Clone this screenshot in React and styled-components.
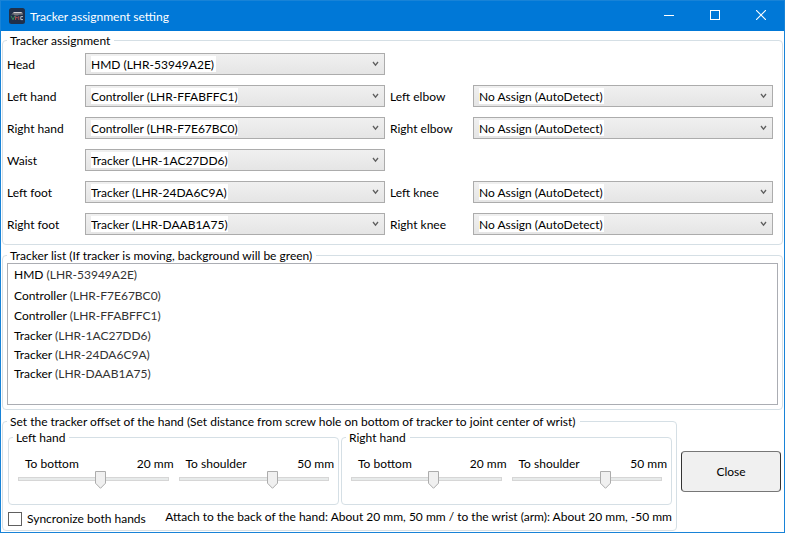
import React, { useState } from "react";
import styled, { createGlobalStyle } from "styled-components";

const GlobalStyle = createGlobalStyle`
  * { box-sizing: border-box; }
  body {
    margin: 0;
    background: #fff;
    color: #000;
    font-family: Lato, "Open Sans", sans-serif;
    font-size: 12px;
    line-height: 15px;
  }
  button, input, select { font: inherit; color: inherit; }
`;

const svgUrl = (svg) => `url("data:image/svg+xml,${encodeURIComponent(svg)}")`;

const chevron = svgUrl(
  `<svg xmlns="http://www.w3.org/2000/svg" width="7" height="6"><path d="M1 1L3.5 4.2L6 1" fill="none" stroke="#606060" stroke-width="1.3"/></svg>`
);
const thumb = svgUrl(
  `<svg xmlns="http://www.w3.org/2000/svg" width="11" height="18"><path d="M.5 .5H10.5V12.2L5.5 17.3L.5 12.2Z" fill="#f0f0f0" stroke="#acacac"/></svg>`
);

const Window = styled.div`
  border: 1px solid #1883d7;
  min-height: 100vh;
`;

const TitleBar = styled.header`
  display: flex;
  align-items: center;
  height: 30px;
  padding-left: 8px;
  background: #0078d7;
  color: #fff;
`;

const Title = styled.h1`
  flex: 1;
  margin: 0 0 0 5px;
  font-size: 12px;
  font-weight: 400;
`;

const CaptionButton = styled.button`
  display: grid;
  place-items: center;
  width: 46px;
  height: 30px;
  padding: 0 0 2px;
  border: 0;
  background: transparent;
`;

const Content = styled.main`
  padding: 2px 1px 1px;
`;

const Group = styled.fieldset`
  min-width: 0;
  margin: 0;
  padding: ${(p) => p.$pad || "0 4px"};
  border: 1px solid #d5dfe5;
  border-radius: 4px;
`;

const Legend = styled.legend`
  padding: 0 4px 0 3px;
  white-space: nowrap;
`;

const AssignGrid = styled.div`
  display: grid;
  grid-template-columns: 78px minmax(0, 1fr) 88px minmax(0, 1fr);
  row-gap: 10px;
  padding-right: 5px;
`;

const FieldLabel = styled.label`
  grid-column: ${(p) => (p.$second ? 3 : 1)};
  align-self: center;
  padding-left: ${(p) => (p.$second ? "5px" : "0")};
`;

const Select = styled.select`
  appearance: none;
  width: 100%;
  height: 22px;
  padding: 0 20px 0 5px;
  border: 1px solid #acacac;
  border-radius: 0;
  background:
    ${chevron} right 5px top 7px no-repeat,
    linear-gradient(#fff, #fff) 5px 2px / ${(p) => p.$mark}px 16px no-repeat,
    linear-gradient(#f0f0f0, #e5e5e5);
`;

const DeviceList = styled.ul`
  height: 142px;
  margin: 0;
  padding: 0 6px;
  border: 1px solid #abadb3;
  list-style: none;
  overflow: auto;
`;

const Device = styled.li`
  line-height: ${(p) => p.$height}px;
`;

const Serial = styled.span`
  color: #333;
`;

const Stack = styled.div`
  display: flex;
  flex-direction: column;
  gap: 3px;
`;

const BottomRow = styled.div`
  display: flex;
  gap: 4px;
  align-items: center;
  padding: 1px 2px 0 0;
`;

const OffsetGroup = styled(Group)`
  flex: 1;
`;

const Hands = styled.div`
  display: grid;
  grid-template-columns: 1fr 1fr;
  gap: 2px;
  padding: 1px 0 0 1px;
`;

const Sliders = styled.div`
  display: grid;
  grid-template-columns: 1fr 1fr;
`;

const SliderHead = styled.div`
  display: flex;
  justify-content: space-between;
  padding-left: 12px;
  white-space: nowrap;
`;

const Range = styled.input`
  appearance: none;
  display: block;
  width: calc(100% - 10px);
  height: 16px;
  margin: 0 5px;
  background: transparent;
  &::-webkit-slider-runnable-track {
    height: 4px;
    border: 1px solid #d6d6d6;
    background: #e7eaea;
  }
  &::-webkit-slider-thumb {
    appearance: none;
    width: 11px;
    height: 18px;
    margin-top: -7px;
    background: ${thumb} no-repeat;
  }
`;

const Footer = styled.div`
  display: flex;
  align-items: center;
  justify-content: space-between;
  height: 25px;
  padding-left: 1px;
  white-space: nowrap;
`;

const CheckLabel = styled.label`
  display: flex;
  align-items: center;
  gap: 5px;
  padding-top: 2px;
`;

const Check = styled.input`
  appearance: none;
  width: 14px;
  height: 14px;
  margin: 0;
  border: 1px solid #606060;
  background: #fff;
  &:checked { box-shadow: inset 0 0 0 2px #fff; background: #212121; }
`;

const Hint = styled.span`
  padding-bottom: 2px;
`;

const CloseButton = styled.button`
  width: 100px;
  height: 41px;
  margin-bottom: 2px;
  padding: 0;
  border: 1px solid #333;
  border-top-color: #777;
  border-bottom-color: #777;
  border-radius: 4px;
  background: #f0f0f0;
`;

function AppIcon() {
  return (
    <svg width="16" height="16" viewBox="0 0 16 16" aria-hidden="true">
      <rect width="16" height="16" rx="2.5" fill="#20304a" />
      <path d="M2.2 6.4L5 4H12.8L13.8 5V6.8H10L9 7.6H6L4.6 6.6Z" fill="#77777d" />
      <path d="M4.6 4.5H12.6" stroke="#d0d0d4" strokeWidth="1" />
      <path d="M2 7.8L4 11.8L5.8 7.8" fill="none" stroke="#3a8a58" strokeWidth="1" />
      <path d="M6.6 12V8.4L8.2 10.2L9.8 8.4V12" fill="none" stroke="#a8504e" strokeWidth="1" />
      <path d="M14 8.6H11.8V11.6H14" fill="none" stroke="#b9c2cc" strokeWidth="1" />
    </svg>
  );
}

const AUTO = "No Assign (AutoDetect)";
const fields = [
  { label: "Head", value: "HMD (LHR-53949A2E)", mark: 125 },
  { label: "Left hand", value: "Controller (LHR-FFABFFC1)", mark: 147 },
  { label: "Left elbow", value: AUTO, mark: 125, second: true },
  { label: "Right hand", value: "Controller (LHR-F7E67BC0)", mark: 147 },
  { label: "Right elbow", value: AUTO, mark: 125, second: true },
  { label: "Waist", value: "Tracker (LHR-1AC27DD6)", mark: 137 },
  { label: "Left foot", value: "Tracker (LHR-24DA6C9A)", mark: 137 },
  { label: "Left knee", value: AUTO, mark: 125, second: true },
  { label: "Right foot", value: "Tracker (LHR-DAAB1A75)", mark: 137 },
  { label: "Right knee", value: AUTO, mark: 125, second: true },
];

const devices = [
  { kind: "HMD", serial: "LHR-53949A2E", height: 22 },
  { kind: "Controller", serial: "LHR-F7E67BC0", height: 20 },
  { kind: "Controller", serial: "LHR-FFABFFC1", height: 20 },
  { kind: "Tracker", serial: "LHR-1AC27DD6", height: 19 },
  { kind: "Tracker", serial: "LHR-24DA6C9A", height: 19 },
  { kind: "Tracker", serial: "LHR-DAAB1A75", height: 19 },
];

const options = [AUTO, ...devices.map((d) => `${d.kind} (${d.serial})`)];

function Field({ label, value, mark, second }) {
  const id = label.toLowerCase().replace(" ", "-");
  return (
    <>
      <FieldLabel htmlFor={id} $second={second}>{label}</FieldLabel>
      <Select id={id} defaultValue={value} $mark={mark}>
        {options.map((o) => <option key={o}>{o}</option>)}
      </Select>
    </>
  );
}

function OffsetSlider({ id, label, initial }) {
  const [value, setValue] = useState(initial);
  return (
    <div>
      <SliderHead>
        <label htmlFor={id}>{label}</label>
        <output htmlFor={id}>{value} mm</output>
      </SliderHead>
      <Range id={id} type="range" min="-180" max="180" value={value}
        onChange={(e) => setValue(Number(e.target.value))} />
    </div>
  );
}

function Hand({ name, id }) {
  return (
    <Group $pad="11px 4px 17px">
      <Legend>{name}</Legend>
      <Sliders>
        <OffsetSlider id={`${id}-bottom`} label="To bottom" initial={20} />
        <OffsetSlider id={`${id}-shoulder`} label="To shoulder" initial={50} />
      </Sliders>
    </Group>
  );
}

export default function App() {
  return (
    <Window>
      <GlobalStyle />
      <TitleBar>
        <AppIcon />
        <Title>Tracker assignment setting</Title>
        <CaptionButton aria-label="Minimize">
          <svg width="10" height="10"><path d="M0 5.5H10" stroke="#fff" /></svg>
        </CaptionButton>
        <CaptionButton aria-label="Maximize">
          <svg width="10" height="10"><rect x=".5" y=".5" width="9" height="9" fill="none" stroke="#fff" /></svg>
        </CaptionButton>
        <CaptionButton aria-label="Close window">
          <svg width="10" height="10"><path d="M0 0L10 10M10 0L0 10" stroke="#fff" strokeWidth="1.1" /></svg>
        </CaptionButton>
      </TitleBar>
      <Content>
        <Stack>
          <Group $pad="5px 4px 9px">
            <Legend>Tracker assignment</Legend>
            <AssignGrid>
              {fields.map((f) => <Field key={f.label} {...f} />)}
            </AssignGrid>
          </Group>
          <Group $pad="0 4px 4px">
            <Legend>Tracker list (If tracker is moving, background will be green)</Legend>
            <DeviceList>
              {devices.map((d) => (
                <Device key={d.serial} $height={d.height}>
                  {d.kind} <Serial>({d.serial})</Serial>
                </Device>
              ))}
            </DeviceList>
          </Group>
          <BottomRow>
            <OffsetGroup>
              <Legend>Set the tracker offset of the hand (Set distance from screw hole on bottom of tracker to joint center of wrist)</Legend>
              <Hands>
                <Hand name="Left hand" id="left" />
                <Hand name="Right hand" id="right" />
              </Hands>
              <Footer>
                <CheckLabel><Check type="checkbox" />Syncronize both hands</CheckLabel>
                <Hint>Attach to the back of the hand: About 20 mm, 50 mm / to the wrist (arm): About 20 mm, -50 mm</Hint>
              </Footer>
            </OffsetGroup>
            <CloseButton type="button">Close</CloseButton>
          </BottomRow>
        </Stack>
      </Content>
    </Window>
  );
}
